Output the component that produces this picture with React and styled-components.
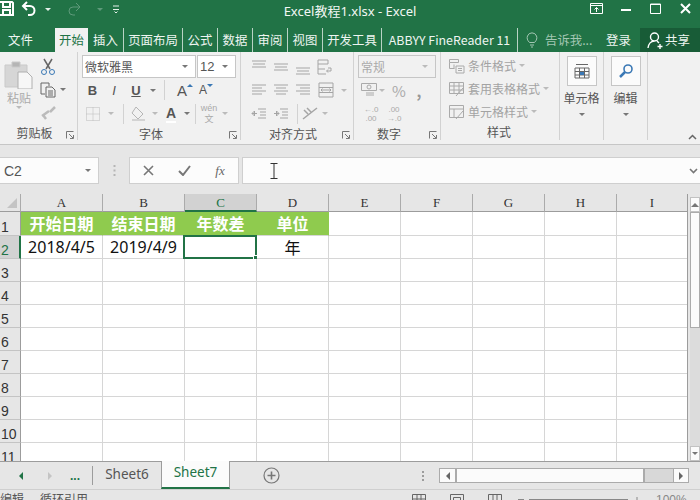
import React from "react";
import styled, { createGlobalStyle } from "styled-components";

const GlobalStyle = createGlobalStyle`
html, body { margin: 0; padding: 0; background: #e6e6e6; overflow: hidden; }
* { box-sizing: border-box; }
`;

const CJK = `"Noto Sans CJK SC", "Noto Sans", sans-serif`;

const Window = styled.div`
  width: 700px;
  height: 500px;
  overflow: hidden;
  display: flex;
  flex-direction: column;
  background: #e6e6e6;
  font-family: ${CJK};
  color: #444;
`;

/* title bar */
const TitleBar = styled.div`
  height: 24px;
  flex: none;
  background: #217346;
  color: #f2f7f4;
  display: grid;
  grid-template-columns: 1fr auto 1fr;
  align-items: center;
`;
const Quick = styled.div`
  display: flex;
  align-items: center;
  margin-top: -6px;
`;
const QuickSlot = styled.span`
  width: ${(p) => p.$w}px;
  display: flex;
  justify-content: center;
`;
const Title = styled.div`
  font-size: 13px;
  margin-top: -4px;
  font-family: "Noto Sans", ${CJK};
`;
const WinControls = styled.div`
  display: flex;
  justify-content: flex-end;
  margin-top: -8px;
`;
const WinBtn = styled.span`
  width: 29.5px;
  display: flex;
  justify-content: center;
`;

/* tabs */
const TabRow = styled.div`
  height: 28px;
  flex: none;
  background: #217346;
  display: flex;
  align-items: flex-end;
  color: #eef5f1;
  font-size: 12.4px;
`;
const Tab = styled.div`
  width: ${(p) => p.$w}px;
  height: 24px;
  padding-left: ${(p) => p.$pl || 0}px;
  display: flex;
  align-items: center;
  justify-content: ${(p) => (p.$pl ? "flex-start" : "center")};
  white-space: nowrap;
  background: ${(p) => (p.$active ? "#f1f1f1" : "transparent")};
  color: ${(p) => (p.$active ? "#217346" : "inherit")};
  border-right: ${(p) => (p.$sep ? "1px solid #b9d3c5" : "none")};
`;
const TellMe = styled.div`
  width: 88px;
  height: 24px;
  display: flex;
  align-items: center;
  padding-left: 4px;
  gap: 3px;
  color: #a3c7b3;
`;
const SignIn = styled.div`
  width: 34px;
  height: 24px;
  display: flex;
  align-items: center;
`;
const Share = styled.div`
  flex: 1;
  height: 24px;
  background: #185c37;
  display: flex;
  align-items: center;
  padding-left: 7px;
`;

/* ribbon */
const Ribbon = styled.div`
  height: 93px;
  flex: none;
  background: #f1f1f1;
  border-bottom: 1px solid #c6c6c6;
  display: flex;
  position: relative;
`;
const Group = styled.div`
  width: ${(p) => p.$w}px;
  flex: none;
  border-right: 1px solid #d2d2d2;
  margin-bottom: 4px;
  padding-top: 3px;
  display: flex;
  flex-direction: column;
  position: relative;
`;
const GroupBody = styled.div`
  flex: 1;
  display: flex;
  flex-direction: ${(p) => (p.$row ? "row" : "column")};
`;
const GroupLabel = styled.div`
  height: 17px;
  text-align: center;
  font-size: 12px;
  line-height: 17px;
  color: #555;
  padding-right: ${(p) => p.$pr || 0}px;
`;
const Launcher = styled.span`
  position: absolute;
  right: 3px;
  bottom: 1px;
  width: 8px;
  height: 8px;
  display: flex;
`;
const Row = styled.div`
  height: ${(p) => p.$h || 23}px;
  display: flex;
  align-items: center;
  padding-left: ${(p) => p.$pl || 0}px;
`;
const Slot = styled.span`
  width: ${(p) => p.$w}px;
  flex: none;
  display: flex;
  align-items: center;
  justify-content: center;
  color: ${(p) => p.$c || "#555"};
  font-size: 12px;
`;
const StackSlot = styled(Slot)`
  flex-direction: column;
  font-family: "Liberation Sans", ${CJK};
  font-size: ${(p) => p.$fs}px;
  line-height: ${(p) => p.$lh}px;
`;
const VSep = styled.span`
  width: 1px;
  height: 20px;
  flex: none;
  background: #d2d2d2;
`;
const Caret = styled.span`
  width: 0;
  height: 0;
  display: inline-block;
  border-left: 3px solid transparent;
  border-right: 3px solid transparent;
  border-top: 3px solid ${(p) => p.$c || "#777"};
`;
const GrowCaret = styled(Caret)`
  margin-bottom: 10px;
  border-top-color: #3a78b5;
  transform: ${(p) => (p.$up ? "rotate(180deg)" : "none")};
`;
const Select = styled.div`
  width: ${(p) => p.$w}px;
  height: 23px;
  flex: none;
  margin-right: ${(p) => p.$mr || 0}px;
  background: ${(p) => p.$bg || "#fff"};
  border: 1px solid #c6c6c6;
  display: flex;
  align-items: center;
  justify-content: space-between;
  padding: 0 7px 0 2px;
  color: ${(p) => p.$c || "#555"};
  font-size: 12px;
`;
const PasteCol = styled.div`
  width: 38px;
  flex: none;
  display: flex;
  flex-direction: column;
  align-items: center;
  padding-top: 4px;
  color: #aaa;
  font-size: 12px;
  line-height: 17px;
`;
const ClipCol = styled.div`
  display: flex;
  flex-direction: column;
`;
const Glyph = styled.span`
  font-family: "Liberation Sans", sans-serif;
  font-weight: ${(p) => (p.$bold ? 700 : 400)};
  font-style: ${(p) => (p.$italic ? "italic" : "normal")};
  text-decoration: ${(p) => (p.$under ? "underline" : "none")};
  border-bottom: ${(p) => (p.$bar ? "2px solid #fff" : "none")};
  font-size: ${(p) => p.$size || 13}px;
  color: ${(p) => p.$c || "#555"};
`;
const NumGlyph = styled(Slot)`
  font-size: 15px;
  font-weight: ${(p) => (p.$bold ? 700 : 400)};
`;
const StyleList = styled.div`
  margin-top: -1px;
`;
const StyleItem = styled.div`
  height: 23px;
  display: flex;
  align-items: center;
  gap: 3px;
  padding-left: 8px;
  color: #a3a3a3;
  font-size: 12px;
`;
const BigCol = styled.div`
  flex: 1;
  display: flex;
  flex-direction: column;
  align-items: center;
  color: #555;
  font-size: 12px;
`;
const BigButton = styled.div`
  width: 30px;
  height: 30px;
  background: #fbfbfb;
  border: 1px solid #c6c6c6;
  display: flex;
  align-items: center;
  justify-content: center;
  margin: 1px 0 3px;
`;
const BigText = styled.div`
  line-height: 18px;
  margin-bottom: 6px;
`;
const Collapse = styled.span`
  position: absolute;
  right: 3px;
  bottom: 4px;
  display: flex;
`;

/* formula bar */
const FormulaBar = styled.div`
  height: 49px;
  flex: none;
  padding-top: 12px;
  display: flex;
  align-items: flex-start;
  background: #e6e6e6;
`;
const FieldBox = styled.div`
  height: 27px;
  width: ${(p) => p.$w}px;
  flex: ${(p) => (p.$grow ? 1 : "none")};
  background: #fcfcfc;
  border: 1px solid #cfcfcf;
  border-left-width: ${(p) => (p.$noLeft ? 0 : 1)}px;
  border-right-width: ${(p) => (p.$noRight ? 0 : 1)}px;
  display: flex;
  align-items: center;
`;
const NameText = styled.span`
  flex: 1;
  padding-left: 4px;
  font: 14px "Liberation Sans", sans-serif;
  color: #555;
`;
const Grip = styled.span`
  width: 30px;
  height: 27px;
  flex: none;
  display: flex;
  align-items: center;
  justify-content: center;
`;
const FxBtn = styled.span`
  width: 36px;
  display: flex;
  justify-content: center;
  font: italic 13px "Liberation Serif", serif;
  color: #666;
`;
const InputArea = styled.div`
  flex: 1;
  display: flex;
  align-items: center;
  justify-content: space-between;
  padding: 0 2px 0 27px;
`;

/* sheet */
const SheetArea = styled.div`
  height: 267px;
  flex: none;
  display: flex;
  overflow: hidden;
`;
const Grid = styled.div`
  width: 688px;
  flex: none;
  display: grid;
  grid-template-columns: 21px 82px 82px 72px 72px 72px 72px 72px 72px 71px;
  grid-template-rows: 18px 24px;
  grid-auto-rows: 23px;
  background: #fff;
  overflow: hidden;
  border-right: 1px solid #9c9c9c;
`;
const ColHead = styled.div`
  background: ${(p) => (p.$sel ? "#d2d2d2" : "#e6e6e6")};
  border-right: 1px solid ${(p) => (p.$last ? "transparent" : "#ababab")};
  border-bottom: ${(p) => (p.$sel ? "2px solid #217346" : "1px solid #9c9c9c")};
  text-align: center;
  font: 13px/17px "Liberation Serif", serif;
  color: ${(p) => (p.$sel ? "#217346" : "#333")};
`;
const Corner = styled.div`
  background: #e6e6e6;
  border-right: 1px solid #ababab;
  border-bottom: 1px solid #9c9c9c;
  position: relative;
`;
const CornerMark = styled.span`
  position: absolute;
  right: 3px;
  bottom: 3px;
  width: 0;
  height: 0;
  border-left: 10px solid transparent;
  border-bottom: 10px solid #c4c4c4;
`;
const RowHead = styled.div`
  background: ${(p) => (p.$sel ? "#d2d2d2" : "#e6e6e6")};
  border-right: ${(p) => (p.$sel ? "2px solid #217346" : "1px solid #9c9c9c")};
  border-bottom: 1px solid #c4c4c4;
  display: flex;
  align-items: flex-end;
  padding-left: 1px;
  font: 14px/16px "Liberation Sans", sans-serif;
  color: ${(p) => (p.$sel ? "#217346" : "#333")};
`;
const Cell = styled.div`
  background: ${(p) => (p.$head ? "#8fcb4e" : "#fff")};
  border-right: 1px solid ${(p) => (p.$head ? "#8fcb4e" : "#d6d6d6")};
  border-bottom: 1px solid #d6d6d6;
  display: flex;
  align-items: center;
  justify-content: center;
  padding-bottom: 1px;
  font-family: "Noto Sans", ${CJK};
  font-size: 16px;
  font-weight: ${(p) => (p.$head ? 700 : 400)};
  color: ${(p) => (p.$head ? "#fff" : "#111")};
  white-space: nowrap;
  position: relative;
`;
const Selection = styled.span`
  position: absolute;
  left: -2px;
  top: -1px;
  right: -1px;
  bottom: -1px;
  border: 2px solid #217346;
`;
const Handle = styled.span`
  position: absolute;
  right: -3px;
  bottom: -3px;
  width: 5px;
  height: 5px;
  background: #217346;
  border: 1px solid #fff;
`;
const VScroll = styled.div`
  flex: 1;
  margin-left: 2px;
  padding-top: 3px;
  display: flex;
  flex-direction: column;
`;
const ScrollBtn = styled.span`
  height: 15px;
  background: #fbfbfb;
  border: 1px solid #c2c2c2;
  display: flex;
  align-items: center;
  justify-content: center;
  flex: none;
`;
const UpArrow = styled.span`
  width: 0;
  height: 0;
  border-left: 4px solid transparent;
  border-right: 4px solid transparent;
  border-bottom: 4px solid #777;
`;
const VThumb = styled.span`
  height: 116px;
  flex: none;
  background: #fbfbfb;
  border: 1px solid #ababab;
`;
const VTrack = styled.span`
  flex: 1;
  background: #dcdcdc;
`;

/* sheet tabs */
const SheetTabs = styled.div`
  height: 28px;
  flex: none;
  background: #e6e6e6;
  border-top: 1px solid #9c9c9c;
  display: flex;
  font: 13.5px "Noto Sans", sans-serif;
`;
const NavBtn = styled.span`
  width: ${(p) => p.$w}px;
  flex: none;
  display: flex;
  align-items: center;
  justify-content: center;
  color: #217346;
  font: 700 12px "Liberation Sans", sans-serif;
`;
const NavSep = styled.span`
  width: 1px;
  height: 19px;
  background: #9c9c9c;
  margin: 4px 0 0;
  flex: none;
`;
const SheetTab = styled.div`
  width: ${(p) => p.$w}px;
  flex: none;
  display: flex;
  align-items: center;
  justify-content: center;
  padding-bottom: 4px;
  color: ${(p) => (p.$active ? "#217346" : "#555")};
  background: ${(p) => (p.$active ? "#fbfbfb" : "transparent")};
  margin-top: ${(p) => (p.$active ? -1 : 0)}px;
  border-left: ${(p) => (p.$active ? "1px solid #9c9c9c" : "none")};
  border-right: ${(p) => (p.$active ? "1px solid #9c9c9c" : "none")};
  border-bottom: ${(p) => (p.$active ? "2px solid #217346" : "none")};
`;
const AddSheet = styled.span`
  width: 82px;
  flex: none;
  display: flex;
  align-items: center;
  justify-content: center;
`;
const HScrollWrap = styled.div`
  flex: 1;
  display: flex;
  align-items: center;
`;
const SplitDots = styled.span`
  width: 16px;
  margin-left: 103px;
  margin-right: 8px;
  display: flex;
  flex-direction: column;
  align-items: center;
  gap: 2px;
`;
const SplitDot = styled.span`
  width: 2px;
  height: 2px;
  background: #9c9c9c;
`;
const HScroll = styled.div`
  width: 250px;
  height: 15px;
  display: flex;
  border: 1px solid #ababab;
  background: #d8d8d8;
`;
const HBtn = styled.span`
  width: 15px;
  flex: none;
  background: #fbfbfb;
  display: flex;
  align-items: center;
  justify-content: center;
  border-left: ${(p) => (p.$end ? "1px solid #ababab" : "none")};
`;
const HThumb = styled.span`
  width: 190px;
  flex: none;
  background: #fbfbfb;
  border-left: 2px solid #ababab;
  border-right: 2px solid #ababab;
`;
const HTrack = styled.span`
  flex: 1;
`;
const TriLeft = styled.span`
  width: 0;
  height: 0;
  border-top: 4px solid transparent;
  border-bottom: 4px solid transparent;
  border-right: 4px solid ${(p) => p.$c || "#666"};
`;
const TriRight = styled.span`
  width: 0;
  height: 0;
  border-top: 4px solid transparent;
  border-bottom: 4px solid transparent;
  border-left: 4px solid ${(p) => p.$c || "#666"};
`;

/* status bar */
const StatusBar = styled.div`
  height: 22px;
  flex: none;
  background: #e6e6e6;
  border-top: 1px solid #cfcfcf;
  display: flex;
  padding-top: 1px;
  font-size: 12px;
  line-height: 16px;
  color: #555;
`;
const StatusText = styled.span`
  width: ${(p) => p.$w}px;
  flex: none;
`;
const ViewBtn = styled.span`
  width: ${(p) => p.$w}px;
  flex: none;
  padding-top: 3px;
`;
const ZoomBtn = styled.span`
  width: 17px;
  flex: none;
  padding-top: 5px;
  display: flex;
  justify-content: center;
`;
const ZoomSlider = styled.span`
  width: 99px;
  height: 2px;
  margin-top: 8px;
  background: #888;
  flex: none;
`;
const ZoomPct = styled.span`
  margin-left: 11px;
  font: 12px/18px "Liberation Sans", sans-serif;
  color: #888;
`;

const Ico = ({ w = 16, h = 16, vb, children, c = "#888", sw = 1 }) => (
  <svg width={w} height={h} viewBox={vb || `0 0 ${w} ${h}`} fill="none" stroke={c} strokeWidth={sw}>
    {children}
  </svg>
);

const Lines = ({ ys, xs, c = "#a5a5a5" }) => (
  <Ico c={c}>
    {ys.map((y, i) => (
      <path key={i} d={`M${xs[i][0]} ${y}H${xs[i][1]}`} />
    ))}
  </Ico>
);

const full = [1, 15];
const LaunchIcon = () => (
  <Launcher>
    <Ico w={8} h={8} c="#777">
      <path d="M.5 7.500v-7h7" />
      <path d="M3 3l4 4M4 7.500h3.500V4" />
    </Ico>
  </Launcher>
);

const columns = ["A", "B", "C", "D", "E", "F", "G", "H", "I"];
const rows = [3, 4, 5, 6, 7, 8, 9, 10, 11];

export default function App() {
  return (
    <Window>
      <GlobalStyle />
      <TitleBar>
        <Quick>
          <QuickSlot $w={14}>
            <Ico w={14} h={16} c="#fff" sw={2}>
              <path d="M0 1h12l1 1v12H0M3 1v5h7V1M3 14V9h7v5" />
            </Ico>
          </QuickSlot>
          <QuickSlot $w={30}>
            <Ico w={16} h={16} c="#fff" sw={2}>
              <path d="M6 1L2 5l4 4M2 5h7a4 4 0 1 1 0 9H7" />
            </Ico>
          </QuickSlot>
          <QuickSlot $w={8}>
            <Caret $c="#e6f0ea" />
          </QuickSlot>
          <QuickSlot $w={44}>
            <Ico w={16} h={14} c="#5f9a7b">
              <path d="M10 1l4 4-4 4M14 5H7a4 4 0 1 0 0 8h2" />
            </Ico>
          </QuickSlot>
          <QuickSlot $w={8}>
            <Caret $c="#5f9a7b" />
          </QuickSlot>
          <QuickSlot $w={24}>
            <Ico w={8} h={9} c="#e6f0ea">
              <path d="M1 1h6M1 4.500h6M2.500 6.500L4 8l1.500-1.500" />
            </Ico>
          </QuickSlot>
        </Quick>
        <Title>Excel教程1.xlsx - Excel</Title>
        <WinControls>
          <WinBtn>
            <Ico w={13} h={11} c="#fff">
              <path d="M.5 .5h12v10H.5zM.5 2.500h12M6.500 9V4.500M4.500 6.500l2-2 2 2" />
            </Ico>
          </WinBtn>
          <WinBtn>
            <Ico w={10} h={11} c="#fff" sw={2}>
              <path d="M0 7h10" />
            </Ico>
          </WinBtn>
          <WinBtn>
            <Ico w={11} h={11} c="#fff">
              <path d="M.5 1h10v9.500H.5zM.5 1.500h10" />
            </Ico>
          </WinBtn>
          <WinBtn>
            <Ico w={11} h={11} c="#fff" sw={2}>
              <path d="M1 1l9 9M10 1l-9 9" />
            </Ico>
          </WinBtn>
        </WinControls>
      </TitleBar>

      <TabRow>
        <Tab $w={55} $pl={8}>文件</Tab>
        <Tab $w={33} $active>开始</Tab>
        <Tab $w={36} $sep>插入</Tab>
        <Tab $w={59} $sep>页面布局</Tab>
        <Tab $w={35} $sep>公式</Tab>
        <Tab $w={35} $sep>数据</Tab>
        <Tab $w={35} $sep>审阅</Tab>
        <Tab $w={35} $sep>视图</Tab>
        <Tab $w={59} $sep>开发工具</Tab>
        <Tab $w={136} $sep>ABBYY FineReader 11</Tab>
        <TellMe>
          <Slot $w={20}>
            <Ico w={12} h={16} c="#a3c7b3">
              <path d="M3.500 10.500C1 8 .8 6 1.500 4a4.800 4.800 0 0 1 9 0c.7 2 .5 4-2 6.500zM4 13h4M5 15h2" />
            </Ico>
          </Slot>
          告诉我...
        </TellMe>
        <SignIn>登录</SignIn>
        <Share>
          <Ico w={18} h={18} c="#fff" sw={1.4}>
            <path d="M7.500 2a4 4 0 1 1 0 8 4 4 0 0 1 0-8zM1 17c.5-4 3-7 6.500-7M10 10l2 2M13 13v5M10.500 15.500h5" />
          </Ico>
          共享
        </Share>
      </TabRow>

      <Ribbon>
        <Group $w={78}>
          <GroupBody $row>
            <PasteCol>
              <Ico w={30} h={30} vb="0 0 30 30" c="#c9c9c9">
                <path d="M1 6h22v22H1z" fill="#d6d6d6" />
                <path d="M8 3h8v5H8z" fill="#b5b5b5" />
                <path d="M14 13h9l5 5v12H14z" fill="#f7f7f7" stroke="#b0b0b0" />
              </Ico>
              <div>粘贴</div>
              <Slot $w={20}><Caret $c="#bbb" /></Slot>
            </PasteCol>
            <ClipCol>
              <Row $pl={2}>
                <Ico w={16} h={18}>
                  <path d="M4 1l6 10M12 1L6 11" stroke="#666" strokeWidth="1.500" />
                  <circle cx="4" cy="14" r="2.500" stroke="#3a78b5" />
                  <circle cx="12" cy="14" r="2.500" stroke="#3a78b5" />
                </Ico>
              </Row>
              <Row $pl={2}>
                <Ico w={16} h={16} c="#666">
                  <path d="M1 1h8v3M1 1v11h4M6 5h6l3 3v7H6zM8 9h5M8 11h5M8 13h5" />
                </Ico>
                <Slot $w={14}><Caret /></Slot>
              </Row>
              <Row $pl={2}>
                <Ico w={16} h={16} c="#bbb" sw={2.500}>
                  <path d="M15 2l-5 5M9 6l-7 5M3 10l3 4" />
                </Ico>
              </Row>
            </ClipCol>
          </GroupBody>
          <GroupLabel $pr={8}>剪贴板</GroupLabel>
          <LaunchIcon />
        </Group>

        <Group $w={163}>
          <GroupBody>
            <Row $pl={4}>
              <Select $w={114} $mr={1}>微软雅黑<Caret /></Select>
              <Select $w={39}>
                <Glyph $size={13}>12</Glyph>
                <Caret />
              </Select>
            </Row>
            <Row $pl={4} $h={24}>
              <Slot $w={21}><Glyph $bold $size={13}>B</Glyph></Slot>
              <Slot $w={22}><Glyph $italic $size={13}>I</Glyph></Slot>
              <Slot $w={22}><Glyph $bold $under $size={13}>U</Glyph></Slot>
              <Slot $w={12}><Caret /></Slot>
              <Slot $w={5} />
              <VSep />
              <Slot $w={10} />
              <Slot $w={20}><Glyph $size={15}>A</Glyph><GrowCaret $up /></Slot>
              <Slot $w={22}><Glyph $size={12}>A</Glyph><GrowCaret /></Slot>
            </Row>
            <Row $pl={4}>
              <Slot $w={22}>
                <Ico w={14} h={14} c="#bbb">
                  <path d="M.5 .5h13v13H.5zM7 .5v13M.5 7h13" strokeDasharray="1 1" />
                </Ico>
              </Slot>
              <Slot $w={14}><Caret $c="#bbb" /></Slot>
              <Slot $w={5} />
              <VSep />
              <Slot $w={28}>
                <Ico w={16} h={16} c="#b5b5b5">
                  <path d="M6 1l7 7-5 5-6-6zM2 14h13" />
                </Ico>
              </Slot>
              <Slot $w={6}><Caret $c="#bbb" /></Slot>
              <Slot $w={26}><Glyph $bold $bar $size={14}>A</Glyph></Slot>
              <Slot $w={6}><Caret /></Slot>
              <Slot $w={5} />
              <VSep />
              <StackSlot $w={26} $c="#aaa" $fs={9} $lh={11}>
                <span>wén</span>
                <span>文</span>
              </StackSlot>
              <Slot $w={6}><Caret $c="#bbb" /></Slot>
            </Row>
          </GroupBody>
          <GroupLabel $pr={16}>字体</GroupLabel>
          <LaunchIcon />
        </Group>

        <Group $w={113}>
          <GroupBody>
            <Row $pl={7}>
              <Slot $w={22}><Lines ys={[2, 5, 8]} xs={[full, [2, 14], full]} /></Slot>
              <Slot $w={22}><Lines ys={[5, 8, 11]} xs={[full, [2, 14], full]} /></Slot>
              <Slot $w={22}><Lines ys={[9, 12, 15]} xs={[full, [2, 14], full]} /></Slot>
              <Slot $w={22}>
                <Ico c="#a5a5a5">
                  <path d="M1 1h10v4H1zM1 5v10h8M1 10h7M11 9h3v3h-4M11 10.500l-1.500 1.500 1.500 1.500" />
                </Ico>
              </Slot>
            </Row>
            <Row $pl={7} $h={24}>
              <Slot $w={22}><Lines ys={[3, 6, 9, 12]} xs={[full, [1, 11], full, [1, 11]]} /></Slot>
              <Slot $w={22}><Lines ys={[3, 6, 9, 12]} xs={[full, [3, 13], full, [3, 13]]} /></Slot>
              <Slot $w={22}><Lines ys={[3, 6, 9, 12]} xs={[full, [5, 15], full, [5, 15]]} /></Slot>
              <Slot $w={24}>
                <Ico c="#a5a5a5">
                  <path d="M1 1h14v14H1zM1 5.500h14M1 10.500h14M3 8h10M3 8l1.500-1.500M3 8l1.500 1.500M13 8l-1.500-1.500M13 8l-1.500 1.500" />
                </Ico>
              </Slot>
              <Slot $w={12}><Caret $c="#bbb" /></Slot>
            </Row>
            <Row $pl={7}>
              <Slot $w={22}>
                <Ico c="#a5a5a5">
                  <path d="M7 3h8M9 6h6M9 9h6M7 12h8M1 7.500h5M1 7.500l2.500-2.500v5z" />
                </Ico>
              </Slot>
              <Slot $w={22}>
                <Ico c="#a5a5a5">
                  <path d="M7 3h8M9 6h6M9 9h6M7 12h8M1 7.500h5M6 7.500L3.500 5v5z" />
                </Ico>
              </Slot>
              <Slot $w={5} />
              <VSep />
              <Slot $w={24}>
                <Ico w={18} h={18} c="#a5a5a5">
                  <path d="M2 14L16 3M3 5l4 4M6 3l4 4" strokeWidth="1.500" />
                </Ico>
              </Slot>
              <Slot $w={6}><Caret $c="#bbb" /></Slot>
            </Row>
          </GroupBody>
          <GroupLabel $pr={8}>对齐方式</GroupLabel>
          <LaunchIcon />
        </Group>

        <Group $w={87}>
          <GroupBody>
            <Row $pl={4}>
              <Select $w={78} $bg="#f1f1f1" $c="#aaa">常规<Caret $c="#bbb" /></Select>
            </Row>
            <Row $pl={6} $h={24}>
              <Slot $w={18}>
                <Ico w={16} h={14} c="#aaa">
                  <path d="M.5 .5h15v7H.5zM5 10h8M5 12h8" />
                  <circle cx="8" cy="4" r="2" />
                </Ico>
              </Slot>
              <Slot $w={8}><Caret $c="#bbb" /></Slot>
              <NumGlyph $w={26} $c="#aaa">%</NumGlyph>
              <NumGlyph $w={14} $c="#999" $bold>,</NumGlyph>
            </Row>
            <Row $pl={6}>
              <StackSlot $w={22} $c="#aaa" $fs={8} $lh={9}>
                <span>←.0</span>
                <span>.00</span>
              </StackSlot>
              <StackSlot $w={24} $c="#aaa" $fs={8} $lh={9}>
                <span>.00</span>
                <span>→.0</span>
              </StackSlot>
            </Row>
          </GroupBody>
          <GroupLabel $pr={16}>数字</GroupLabel>
          <LaunchIcon />
        </Group>

        <Group $w={119}>
          <GroupBody>
            <StyleList>
              <StyleItem>
                <Ico c="#aaa">
                  <path d="M.5 1.500h9v3h-9zM.5 4.500v6h5M5 6.500v4M7 8h8v7H7zM9 10.500h4M9 12.500h4" />
                </Ico>
                条件格式<Caret $c="#bbb" />
              </StyleItem>
              <StyleItem>
                <Ico c="#aaa">
                  <path d="M.5 1.500h14v11H.5zM.5 5h14M.5 9h14M5 1.500v11M10 1.500v11M7 15l7-8" />
                </Ico>
                套用表格格式<Caret $c="#bbb" />
              </StyleItem>
              <StyleItem>
                <Ico c="#aaa">
                  <path d="M.5 1.500h14v12H.5zM.5 5h14M5 5v8M7 15l7-8" />
                </Ico>
                单元格样式<Caret $c="#bbb" />
              </StyleItem>
            </StyleList>
          </GroupBody>
          <GroupLabel $pr={2}>样式</GroupLabel>
        </Group>

        <Group $w={44}>
          <BigCol>
            <BigButton>
              <Ico w={16} h={16} c="#666">
                <path d="M1 5h14v10H1zM1 8.500h14M1 12h14M5.500 5v10M10.500 5v10M2 1.500h12" />
                <path d="M6 9h4v3H6z" fill="#3a78b5" stroke="none" />
              </Ico>
            </BigButton>
            <BigText>单元格</BigText>
            <Caret />
          </BigCol>
        </Group>

        <Group $w={44}>
          <BigCol>
            <BigButton>
              <Ico w={16} h={16} c="#3a78b5" sw={1.600}>
                <circle cx="10" cy="6" r="4" />
                <path d="M7 9l-5 5" strokeWidth="2.500" />
              </Ico>
            </BigButton>
            <BigText>编辑</BigText>
            <Caret />
          </BigCol>
        </Group>

        <Collapse>
          <Ico w={9} h={6} c="#666" sw={1.500}>
            <path d="M1 5l3.500-3.500L8 5" />
          </Ico>
        </Collapse>
      </Ribbon>

      <FormulaBar>
        <FieldBox $w={99} $noLeft>
          <NameText>C2</NameText>
          <Slot $w={20}><Caret /></Slot>
        </FieldBox>
        <Grip>
          <Ico w={3} h={11} c="#b5b5b5" sw={2}>
            <path d="M1.500 0v2M1.500 4.500v2M1.500 9v2" />
          </Ico>
        </Grip>
        <FieldBox $w={110}>
          <FxBtn>
            <Ico w={11} h={11} c="#777" sw={1.600}>
              <path d="M1 1l9 9M10 1l-9 9" />
            </Ico>
          </FxBtn>
          <FxBtn>
            <Ico w={13} h={11} c="#777" sw={2}>
              <path d="M1 6l4 4 7-9" />
            </Ico>
          </FxBtn>
          <FxBtn>fx</FxBtn>
        </FieldBox>
        <Slot $w={3} />
        <FieldBox $grow $noRight>
          <InputArea>
            <Ico w={8} h={16} c="#333">
              <path d="M.5 .5h7M4 .5v15M.5 15.500h7" />
            </Ico>
            <Ico w={9} h={6} c="#777" sw={1.600}>
              <path d="M1 1l3.500 3.500L8 1" />
            </Ico>
          </InputArea>
        </FieldBox>
      </FormulaBar>

      <SheetArea>
        <Grid>
          <Corner><CornerMark /></Corner>
          {columns.map((c) => (
            <ColHead key={c} $sel={c === "C"} $last={c === "I"}>{c}</ColHead>
          ))}

          <RowHead>1</RowHead>
          <Cell $head>开始日期</Cell>
          <Cell $head>结束日期</Cell>
          <Cell $head>年数差</Cell>
          <Cell $head>单位</Cell>
          {columns.slice(4).map((c) => <Cell key={c} />)}

          <RowHead $sel>2</RowHead>
          <Cell>2018/4/5</Cell>
          <Cell>2019/4/9</Cell>
          <Cell>
            <Selection><Handle /></Selection>
          </Cell>
          <Cell>年</Cell>
          {columns.slice(4).map((c) => <Cell key={c} />)}

          {rows.map((r) => (
            <React.Fragment key={r}>
              <RowHead>{r}</RowHead>
              {columns.map((c) => <Cell key={c} />)}
            </React.Fragment>
          ))}
        </Grid>
        <VScroll>
          <ScrollBtn><UpArrow /></ScrollBtn>
          <VThumb />
          <VTrack />
          <ScrollBtn><Caret $c="#777" /></ScrollBtn>
        </VScroll>
      </SheetArea>

      <SheetTabs>
        <NavBtn $w={42}><TriLeft $c="#217346" /></NavBtn>
        <NavBtn $w={16}><TriRight $c="#c4c4c4" /></NavBtn>
        <NavBtn $w={34}>...</NavBtn>
        <NavSep />
        <SheetTab $w={68}>Sheet6</SheetTab>
        <SheetTab $w={69} $active>Sheet7</SheetTab>
        <AddSheet>
          <Ico w={17} h={17} c="#777" sw={1.200}>
            <circle cx="8.500" cy="8.500" r="7.500" />
            <path d="M8.500 4.500v8M4.500 8.500h8" strokeWidth="1.600" />
          </Ico>
        </AddSheet>
        <HScrollWrap>
          <SplitDots><SplitDot /><SplitDot /><SplitDot /></SplitDots>
          <HScroll>
            <HBtn><TriLeft /></HBtn>
            <HThumb />
            <HTrack />
            <HBtn $end><TriRight /></HBtn>
          </HScroll>
        </HScrollWrap>
      </SheetTabs>

      <StatusBar>
        <StatusText $w={40}>编辑</StatusText>
        <StatusText $w={372}>循环引用</StatusText>
        <ViewBtn $w={38}>
          <Ico w={14} h={14} c="#666"><path d="M.5 .5h13v13H.5zM.5 5h13M5 .5v13M9 .5v13" /></Ico>
        </ViewBtn>
        <ViewBtn $w={38}>
          <Ico w={14} h={14} c="#666"><path d="M.5 .5h13v13H.5zM3.500 3.500h7v7h-7z" /></Ico>
        </ViewBtn>
        <ViewBtn $w={24}>
          <Ico w={14} h={14} c="#666"><path d="M.5 .5h13v13H.5zM5 .5v13M9 .5v13" /></Ico>
        </ViewBtn>
        <ZoomBtn>
          <Ico w={6} h={6} c="#888"><path d="M0 3.500h6" /></Ico>
        </ZoomBtn>
        <ZoomSlider />
        <ZoomBtn>
          <Ico w={8} h={8} c="#888"><path d="M0 4.500h8M4 1v7" /></Ico>
        </ZoomBtn>
        <ZoomPct>100%</ZoomPct>
      </StatusBar>
    </Window>
  );
}
